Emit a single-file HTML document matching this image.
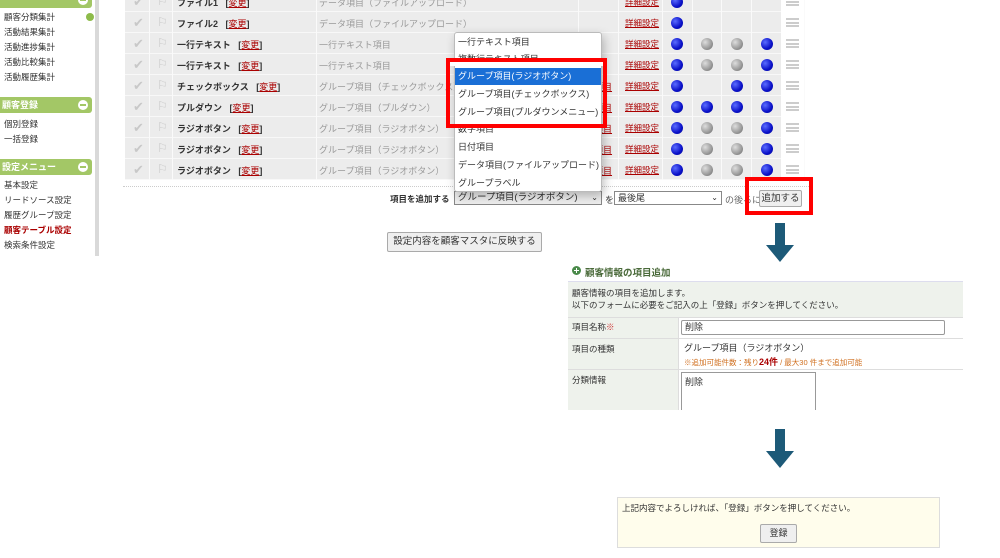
<!DOCTYPE html>
<html><head><meta charset="utf-8">
<style>
*{margin:0;padding:0;box-sizing:border-box}
body{width:1000px;height:558px;background:#fff;position:relative;overflow:hidden;font-family:"Liberation Sans","Noto Sans CJK JP",sans-serif;font-size:9px;color:#333}
.a{position:absolute;white-space:nowrap}
.gh{position:absolute;left:0;width:92px;height:16px;background:#a3c766;border-radius:0 3px 3px 0;color:#fff;font-weight:bold;font-size:9px;line-height:16px;padding-left:2px}
.gh i{position:absolute;right:4px;top:3px;width:10px;height:10px;border-radius:50%;background:#fff}
.gh i:after{content:"";position:absolute;left:2px;top:4px;width:6px;height:2px;background:#a3c766}
.si{position:absolute;left:4px;font-size:8.5px;color:#333}
.row{position:absolute;left:125px;width:680px;height:21px;background:#ececec;border-bottom:1px solid #f8f8f8}
.c{position:absolute;top:0;height:21px;border-right:1px solid #fafafa}
.nm{font-weight:bold;font-size:9px;position:absolute;left:177px;color:#333}
.nm u{color:#a00;font-weight:normal}
.tp{position:absolute;left:319px;color:#999;font-size:9px}
.dl{position:absolute;left:625px;color:#a00;text-decoration:underline;font-size:8.5px}
.dot{position:absolute;width:12px;height:12px;border-radius:50%}
.b{background:radial-gradient(circle at 35% 35%,#5a6cff,#0a10c8 60%,#000890)}
.g{background:radial-gradient(circle at 35% 35%,#ddd,#999 60%,#666)}
.hb{position:absolute;left:786px;width:13px;height:9px;border-top:2px solid #ccc;border-bottom:2px solid #ccc}
.hb:after{content:"";position:absolute;left:0;right:0;top:1.5px;height:2px;background:#ccc}
.arrow{position:absolute;width:30px;height:40px}
.dd div{position:absolute;left:3px;line-height:12px}
</style></head><body>

<div class="a" style="left:95px;top:0;width:4px;height:256px;background:#d9d9d9"></div>
<div class="gh" style="top:-6px;height:14px"><i style="top:1px"></i></div>
<div class="a" style="left:86px;top:13px;width:8px;height:8px;border-radius:50%;background:#8dbb4a"></div>
<div class="si" style="top:11px">顧客分類集計</div>
<div class="si" style="top:26px">活動結果集計</div>
<div class="si" style="top:41px">活動進捗集計</div>
<div class="si" style="top:56px">活動比較集計</div>
<div class="si" style="top:71px">活動履歴集計</div>
<div class="gh" style="top:97px">顧客登録<i></i></div>
<div class="si" style="top:118px">個別登録</div>
<div class="si" style="top:133px">一括登録</div>
<div class="gh" style="top:159px">設定メニュー<i></i></div>
<div class="si" style="top:179px">基本設定</div>
<div class="si" style="top:194px">リードソース設定</div>
<div class="si" style="top:209px">履歴グループ設定</div>
<div class="si" style="top:224px;color:#a00;font-weight:bold">顧客テーブル設定</div>
<div class="si" style="top:239px">検索条件設定</div>

<div id="tbl"></div>
<script>
var names=["ファイル1","ファイル2","一行テキスト","一行テキスト","チェックボックス","プルダウン","ラジオボタン","ラジオボタン","ラジオボタン"];
var types=["データ項目（ファイルアップロード）","データ項目（ファイルアップロード）","一行テキスト項目","一行テキスト項目","グループ項目（チェックボックス）","グループ項目（プルダウン）","グループ項目（ラジオボタン）","グループ項目（ラジオボタン）","グループ項目（ラジオボタン）"];
var dots=["b---","b---","bggb","bggb","b-bb","bbbb","bggb","bggb","bggb"];
var cx=[677,707,737,767];
var h="";
for(var i=0;i<9;i++){
 var t=-9+21*i;
 h+='<div class="row" style="top:'+t+'px">';
 [24,47,191,453,493,537,567,596,626,656].forEach(function(x){h+='<div class="c" style="left:'+x+'px;width:0"></div>'});
 h+='<div class="c" style="left:656px;width:24px;background:#fff"></div></div>';
 h+='<div class="a" style="left:133px;top:'+(t+3)+'px;color:#c8c8c8;font-size:13px">✔</div>';
 h+='<div class="a" style="left:157px;top:'+(t+3)+'px;color:#c8c8c8;font-size:12px">⚐</div>';
 h+='<div class="nm" style="top:'+(t+5)+'px">'+names[i]+'&nbsp;&nbsp; [<u>変更</u>]</div>';
 h+='<div class="tp" style="top:'+(t+5)+'px">'+types[i]+'</div>';
 if(i>=4)h+='<div class="a" style="left:594px;top:'+(t+5)+'px;color:#a00;text-decoration:underline">項目</div>';
 h+='<div class="dl" style="top:'+(t+5)+'px">詳細設定</div>';
 for(var k=0;k<4;k++){var d=dots[i][k];if(d!="-")h+='<div class="dot '+d+'" style="left:'+(cx[k]-6)+'px;top:'+(t+5)+'px"></div>';}
 h+='<div class="hb" style="top:'+(t+6)+'px"></div>';
}
document.getElementById("tbl").innerHTML=h;
</script>
<div class="a" style="left:123px;top:186px;width:690px;border-top:1px dotted #ccc"></div>

<div class="a" style="left:390px;top:193px;font-weight:bold;font-size:8.5px">項目を追加する</div>
<div class="a" style="left:454px;top:191px;width:148px;height:14px;border:1px solid #888;background:#eee;font-size:9.5px;line-height:12px;padding-left:3px">グループ項目(ラジオボタン)<span style="position:absolute;right:3px;font-size:8px">⌄</span></div>
<div class="a" style="left:605px;top:193px">を</div>
<div class="a" style="left:614px;top:191px;width:108px;height:14px;border:1px solid #888;background:#fff;font-size:9px;line-height:12px;padding-left:3px">最後尾<span style="position:absolute;right:3px;font-size:8px">⌄</span></div>
<div class="a" style="left:725px;top:193px;color:#666">の後ろに</div>
<div class="a" style="left:759px;top:190px;width:43px;height:17px;border:1px solid #aaa;border-radius:2px;background:#efefef;font-size:9.5px;line-height:15px;text-align:center">追加する</div>
<div class="a" style="left:745px;top:177px;width:68px;height:38px;border:4px solid #f00"></div>

<div class="a" style="left:387px;top:232px;width:155px;height:20px;border:1px solid #aaa;border-radius:2px;background:#efefef;font-size:9.5px;line-height:18px;text-align:center">設定内容を顧客マスタに反映する</div>

<div class="a dd" style="left:454px;top:32px;width:148px;height:160px;background:#fff;border:1px solid #bbb;border-radius:3px;box-shadow:2px 4px 10px rgba(0,0,0,.25);font-size:9px">
<div style="top:3px">一行テキスト項目</div>
<div style="top:20px">複数行テキスト項目</div>
<div style="left:0;top:35px;width:146px;height:17px;background:#1a6fd6;color:#fff;padding-left:3px;line-height:17px">グループ項目(ラジオボタン)</div>
<div style="top:55px">グループ項目(チェックボックス)</div>
<div style="top:73px">グループ項目(プルダウンメニュー)</div>
<div style="top:90px">数字項目</div>
<div style="top:108px">日付項目</div>
<div style="top:126px">データ項目(ファイルアップロード)</div>
<div style="top:144px">グループラベル</div>
</div>
<div class="a" style="left:446px;top:58px;width:161px;height:70px;border:4px solid #f00"></div>
<div class="a" style="left:450px;top:62px;width:153px;height:4px;background:#fff"></div>

<svg class="arrow" style="left:765px;top:223px" viewBox="0 0 30 40"><path d="M10 0H20V22H29L15 39L1 22H10Z" fill="#1d5a78"/></svg>
<svg class="arrow" style="left:765px;top:429px" viewBox="0 0 30 40"><path d="M10 0H20V22H29L15 39L1 22H10Z" fill="#1d5a78"/></svg>

<div class="a" style="left:572px;top:266px;width:9px;height:9px;border-radius:50%;background:#4a8a4a"></div>
<div class="a" style="left:574px;top:270px;width:5px;height:1px;background:#fff"></div>
<div class="a" style="left:576px;top:268px;width:1px;height:5px;background:#fff"></div>
<div class="a" style="left:585px;top:265px;font-weight:bold;font-size:9.5px;color:#4a6a3a">顧客情報の項目追加</div>
<div class="a" style="left:568px;top:281px;width:395px;height:129px;background:#eef2ec;border-top:1px solid #dde"></div>
<div class="a" style="left:572px;top:287px;font-size:8.5px;line-height:12px;color:#333">顧客情報の項目を追加します。<br>以下のフォームに必要をご記入の上「登録」ボタンを押してください。</div>
<div class="a" style="left:568px;top:317px;width:395px;height:93px;border-top:1px solid #ddd"></div>
<div class="a" style="left:678px;top:318px;width:285px;height:92px;background:#fff;border-left:1px solid #ddd"></div>
<div class="a" style="left:568px;top:338px;width:395px;border-top:1px solid #ddd"></div>
<div class="a" style="left:568px;top:369px;width:395px;border-top:1px solid #ddd"></div>
<div class="a" style="left:572px;top:321px;font-size:8.5px">項目名称<span style="color:#c33">※</span></div>
<div class="a" style="left:681px;top:320px;width:264px;height:15px;border:1px solid #999;border-radius:2px;padding-left:3px;font-size:9px;line-height:13px">削除</div>
<div class="a" style="left:572px;top:343px;font-size:8.5px">項目の種類</div>
<div class="a" style="left:684px;top:341px;font-size:9px">グループ項目（ラジオボタン）</div>
<div class="a" style="left:684px;top:355px;font-size:7.5px;color:#d07020">※追加可能件数：残り<b style="color:#a00;font-size:9px">24件</b> / 最大30 件まで追加可能</div>
<div class="a" style="left:572px;top:374px;font-size:8.5px">分類情報</div>
<div class="a" style="left:681px;top:372px;width:135px;height:38px;border:1px solid #999;border-bottom:none;padding:2px 3px;font-size:9px">削除</div>

<div class="a" style="left:617px;top:497px;width:323px;height:51px;background:#fffdec;border:1px solid #ddd"></div>
<div class="a" style="left:622px;top:502px;font-size:8.5px">上記内容でよろしければ、「登録」ボタンを押してください。</div>
<div class="a" style="left:760px;top:524px;width:37px;height:19px;border:1px solid #aaa;border-radius:2px;background:#efefef;text-align:center;line-height:17px;font-size:9px">登録</div>
</body></html>
